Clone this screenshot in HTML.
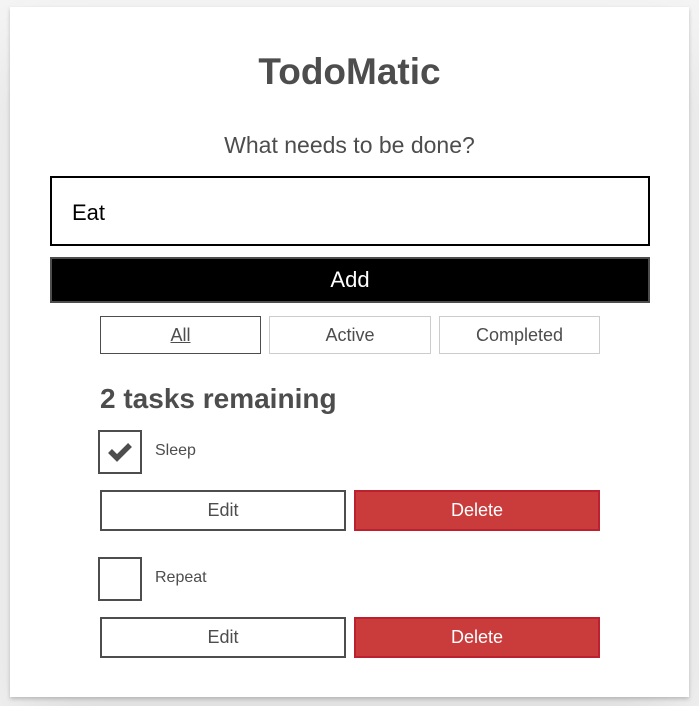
<!DOCTYPE html>
<html><head><style>
body{margin:0;background:#f5f5f5;width:699px;height:706px;position:relative;font-family:"Liberation Sans",Arial,sans-serif;color:#4d4d4d;overflow:hidden}
.card{position:absolute;left:10px;top:7px;width:679px;height:690px;background:#fff;box-shadow:0 2px 4px 0 rgba(0,0,0,.2),0 2.5rem 5rem 0 rgba(0,0,0,.1)}
.a{position:absolute;box-sizing:border-box}
.c{display:flex;align-items:center;justify-content:center}
.btn{border:2px solid #4d4d4d;font-size:18px;background:#fff;color:#4d4d4d}
.del{background:#ca3c3c;border:2px solid #bd2130;color:#fff;font-size:18px}
.f{border:1px solid #ccc;font-size:18px;color:#4d4d4d}
.cb{width:44px;height:44px;border:2px solid #4d4d4d}
.lab{font-size:16px}
</style></head><body>
<div class="card"></div>
<div class="a c" style="left:0;width:699px;top:50px;height:44px;font-size:37px;font-weight:bold">TodoMatic</div>
<div class="a c" style="left:0;width:699px;top:131px;height:28px;font-size:23px">What needs to be done?</div>
<div class="a" style="left:50px;top:176px;width:600px;height:70px;border:2px solid #000;font-size:22px;color:#000;padding:22px 0 0 20px">Eat</div>
<div class="a c" style="left:50px;top:257px;width:600px;height:46px;background:#000;border:2px solid #4d4d4d;color:#fff;font-size:22px">Add</div>
<div class="a c f" style="left:100px;top:316px;width:161px;height:38px;border-color:#4d4d4d"><u>All</u></div>
<div class="a c f" style="left:269px;top:316px;width:162px;height:38px">Active</div>
<div class="a c f" style="left:439px;top:316px;width:161px;height:38px">Completed</div>
<div class="a" style="left:100px;top:383px;font-size:28px;font-weight:bold">2 tasks remaining</div>
<div class="a cb" style="left:98px;top:430px"><svg width="40" height="40" style="position:absolute;left:0;top:0"><path d="M10 19 L17 26 L30 13" fill="none" stroke="#4d4d4d" stroke-width="5.5"/></svg></div>
<div class="a lab" style="left:155px;top:442px">Sleep</div>
<div class="a c btn" style="left:100px;top:490px;width:246px;height:41px">Edit</div>
<div class="a c del" style="left:354px;top:490px;width:246px;height:41px">Delete</div>
<div class="a cb" style="left:98px;top:557px"></div>
<div class="a lab" style="left:155px;top:569px">Repeat</div>
<div class="a c btn" style="left:100px;top:617px;width:246px;height:41px">Edit</div>
<div class="a c del" style="left:354px;top:617px;width:246px;height:41px">Delete</div>
</body></html>
